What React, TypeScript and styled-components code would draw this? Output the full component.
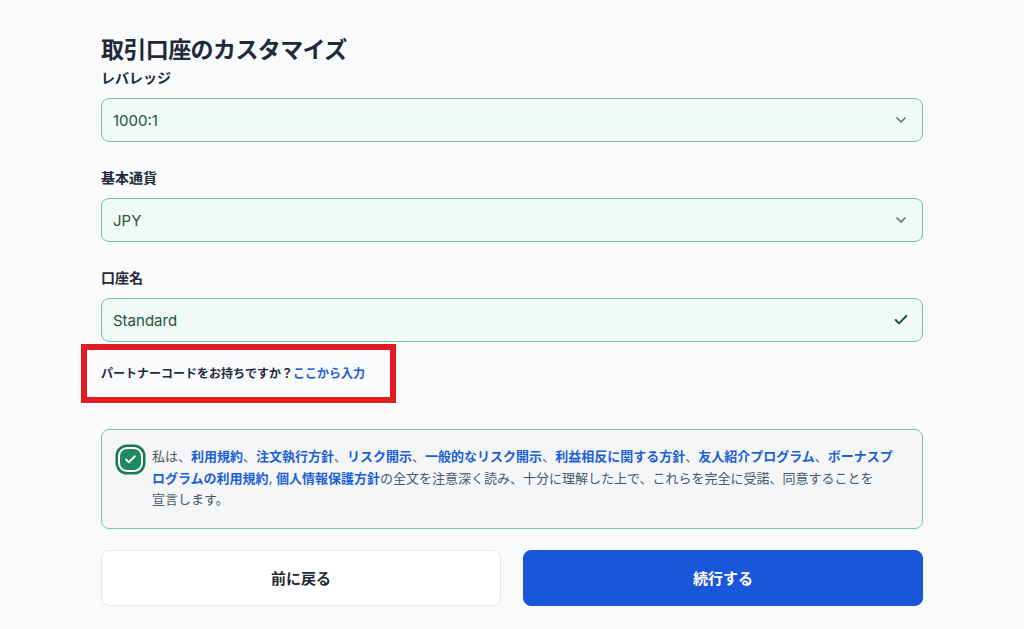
import React from 'react';
import styled, { createGlobalStyle } from 'styled-components';
import { ChevronDown, Check } from 'lucide-react';

const GlobalStyle = createGlobalStyle`
  html, body {
    margin: 0;
    padding: 0;
    background: #f8fafc;
  }
  body {
    font-family: "Inter", "Noto Sans CJK JP", sans-serif;
    color: #1f2937;
  }
  * {
    box-sizing: border-box;
  }
`;

const Page = styled.div`
  width: 822px;
  margin: 0 auto;
  padding-top: 35px;
  display: flex;
  flex-direction: column;
`;

const Title = styled.h1`
  margin: 0 0 3px;
  font-size: 23px;
  line-height: 30px;
  font-weight: 700;
  color: #1f2937;
  letter-spacing: -0.6px;
`;

const Form = styled.div`
  display: flex;
  flex-direction: column;
  gap: 26px;
`;

const Field = styled.div`
  display: flex;
  flex-direction: column;
  gap: 10px;
`;

const Label = styled.label`
  font-size: 14px;
  line-height: 20px;
  font-weight: 600;
  color: #1f2937;
`;

const InputBox = styled.div`
  height: 44px;
  border: 1px solid #72c2a2;
  border-radius: 8px;
  background: #f1f9f6;
  display: flex;
  align-items: center;
  justify-content: space-between;
  padding: 0 13px 0 11px;
  font-size: 15px;
  color: #24533f;
`;

const IconSlot = styled.span<{ $tone: string }>`
  display: flex;
  color: ${p => p.$tone};
`;

const PartnerRow = styled.div`
  margin-top: 22px;
  position: relative;
  align-self: flex-start;
  font-size: 12px;
  line-height: 20px;
  font-weight: 600;
  color: #1f2937;
`;

const PartnerLink = styled.span`
  color: #1d5fd6;
`;

const Highlight = styled.span`
  position: absolute;
  top: -20px;
  bottom: -19px;
  left: -20px;
  right: -31px;
  border: 6px solid #e31b23;
  pointer-events: none;
`;

const Consent = styled.div`
  margin-top: 45px;
  border: 1px solid #7cc6a8;
  border-radius: 8px;
  background: #f3f5f6;
  padding: 16px 14px 17px 18px;
  display: flex;
  align-items: flex-start;
  gap: 11px;
`;

const CheckBox = styled.span`
  flex: none;
  width: 21px;
  height: 21px;
  margin-top: 3px;
  border-radius: 7px;
  background: #1f8a62;
  box-shadow: 0 0 0 2px #ffffff, 0 0 0 4.5px #1b7655;
  display: flex;
  align-items: center;
  justify-content: center;
  color: #ffffff;
`;

const ConsentText = styled.p`
  margin: 0;
  font-size: 13px;
  line-height: 21.5px;
  color: #4b5563;
  white-space: nowrap;
`;

const DocLink = styled.span`
  color: #1d5fd6;
  font-weight: 600;
`;

const Actions = styled.div`
  margin-top: 21px;
  display: grid;
  grid-template-columns: 1fr 1fr;
  gap: 22px;
`;

const Button = styled.button<{ $primary?: boolean }>`
  height: 56px;
  border-radius: 8px;
  font-family: inherit;
  font-size: 15px;
  font-weight: 600;
  cursor: pointer;
  border: 1px solid ${p => (p.$primary ? '#1a56db' : '#e5e7eb')};
  background: ${p => (p.$primary ? '#1a56db' : '#ffffff')};
  color: ${p => (p.$primary ? '#ffffff' : '#1f2937')};
`;

const fields = [
  { label: 'レバレッジ', value: '1000:1', icon: 'select' },
  { label: '基本通貨', value: 'JPY', icon: 'select' },
  { label: '口座名', value: 'Standard', icon: 'valid' },
];

const App = () => {
  return (
    <>
      <GlobalStyle />
      <Page>
        <Title>取引口座のカスタマイズ</Title>
        <Form>
          {fields.map(field => (
            <Field key={field.label}>
              <Label>{field.label}</Label>
              <InputBox>
                <span>{field.value}</span>
                {field.icon === 'select' ? (
                  <IconSlot $tone="#6b7280">
                    <ChevronDown size={16} strokeWidth={2.6} />
                  </IconSlot>
                ) : (
                  <IconSlot $tone="#1c4b40">
                    <Check size={16} strokeWidth={3} />
                  </IconSlot>
                )}
              </InputBox>
            </Field>
          ))}
        </Form>

        <PartnerRow>
          パートナーコードをお持ちですか？<PartnerLink>ここから入力</PartnerLink>
          <Highlight />
        </PartnerRow>

        <Consent>
          <CheckBox>
            <Check size={13} strokeWidth={3.5} />
          </CheckBox>
          <ConsentText>
            私は、<DocLink>利用規約</DocLink>、<DocLink>注文執行方針</DocLink>、<DocLink>リスク開示</DocLink>、<DocLink>一般的なリスク開示</DocLink>、<DocLink>利益相反に関する方針</DocLink>、<DocLink>友人紹介プログラム</DocLink>、<DocLink>ボーナスプ</DocLink>
            <br />
            <DocLink>ログラムの利用規約</DocLink>, <DocLink>個人情報保護方針</DocLink>の全文を注意深く読み、十分に理解した上で、これらを完全に受諾、同意することを
            <br />
            宣言します。
          </ConsentText>
        </Consent>

        <Actions>
          <Button>前に戻る</Button>
          <Button $primary>続行する</Button>
        </Actions>
      </Page>
    </>
  );
};

export default App;
